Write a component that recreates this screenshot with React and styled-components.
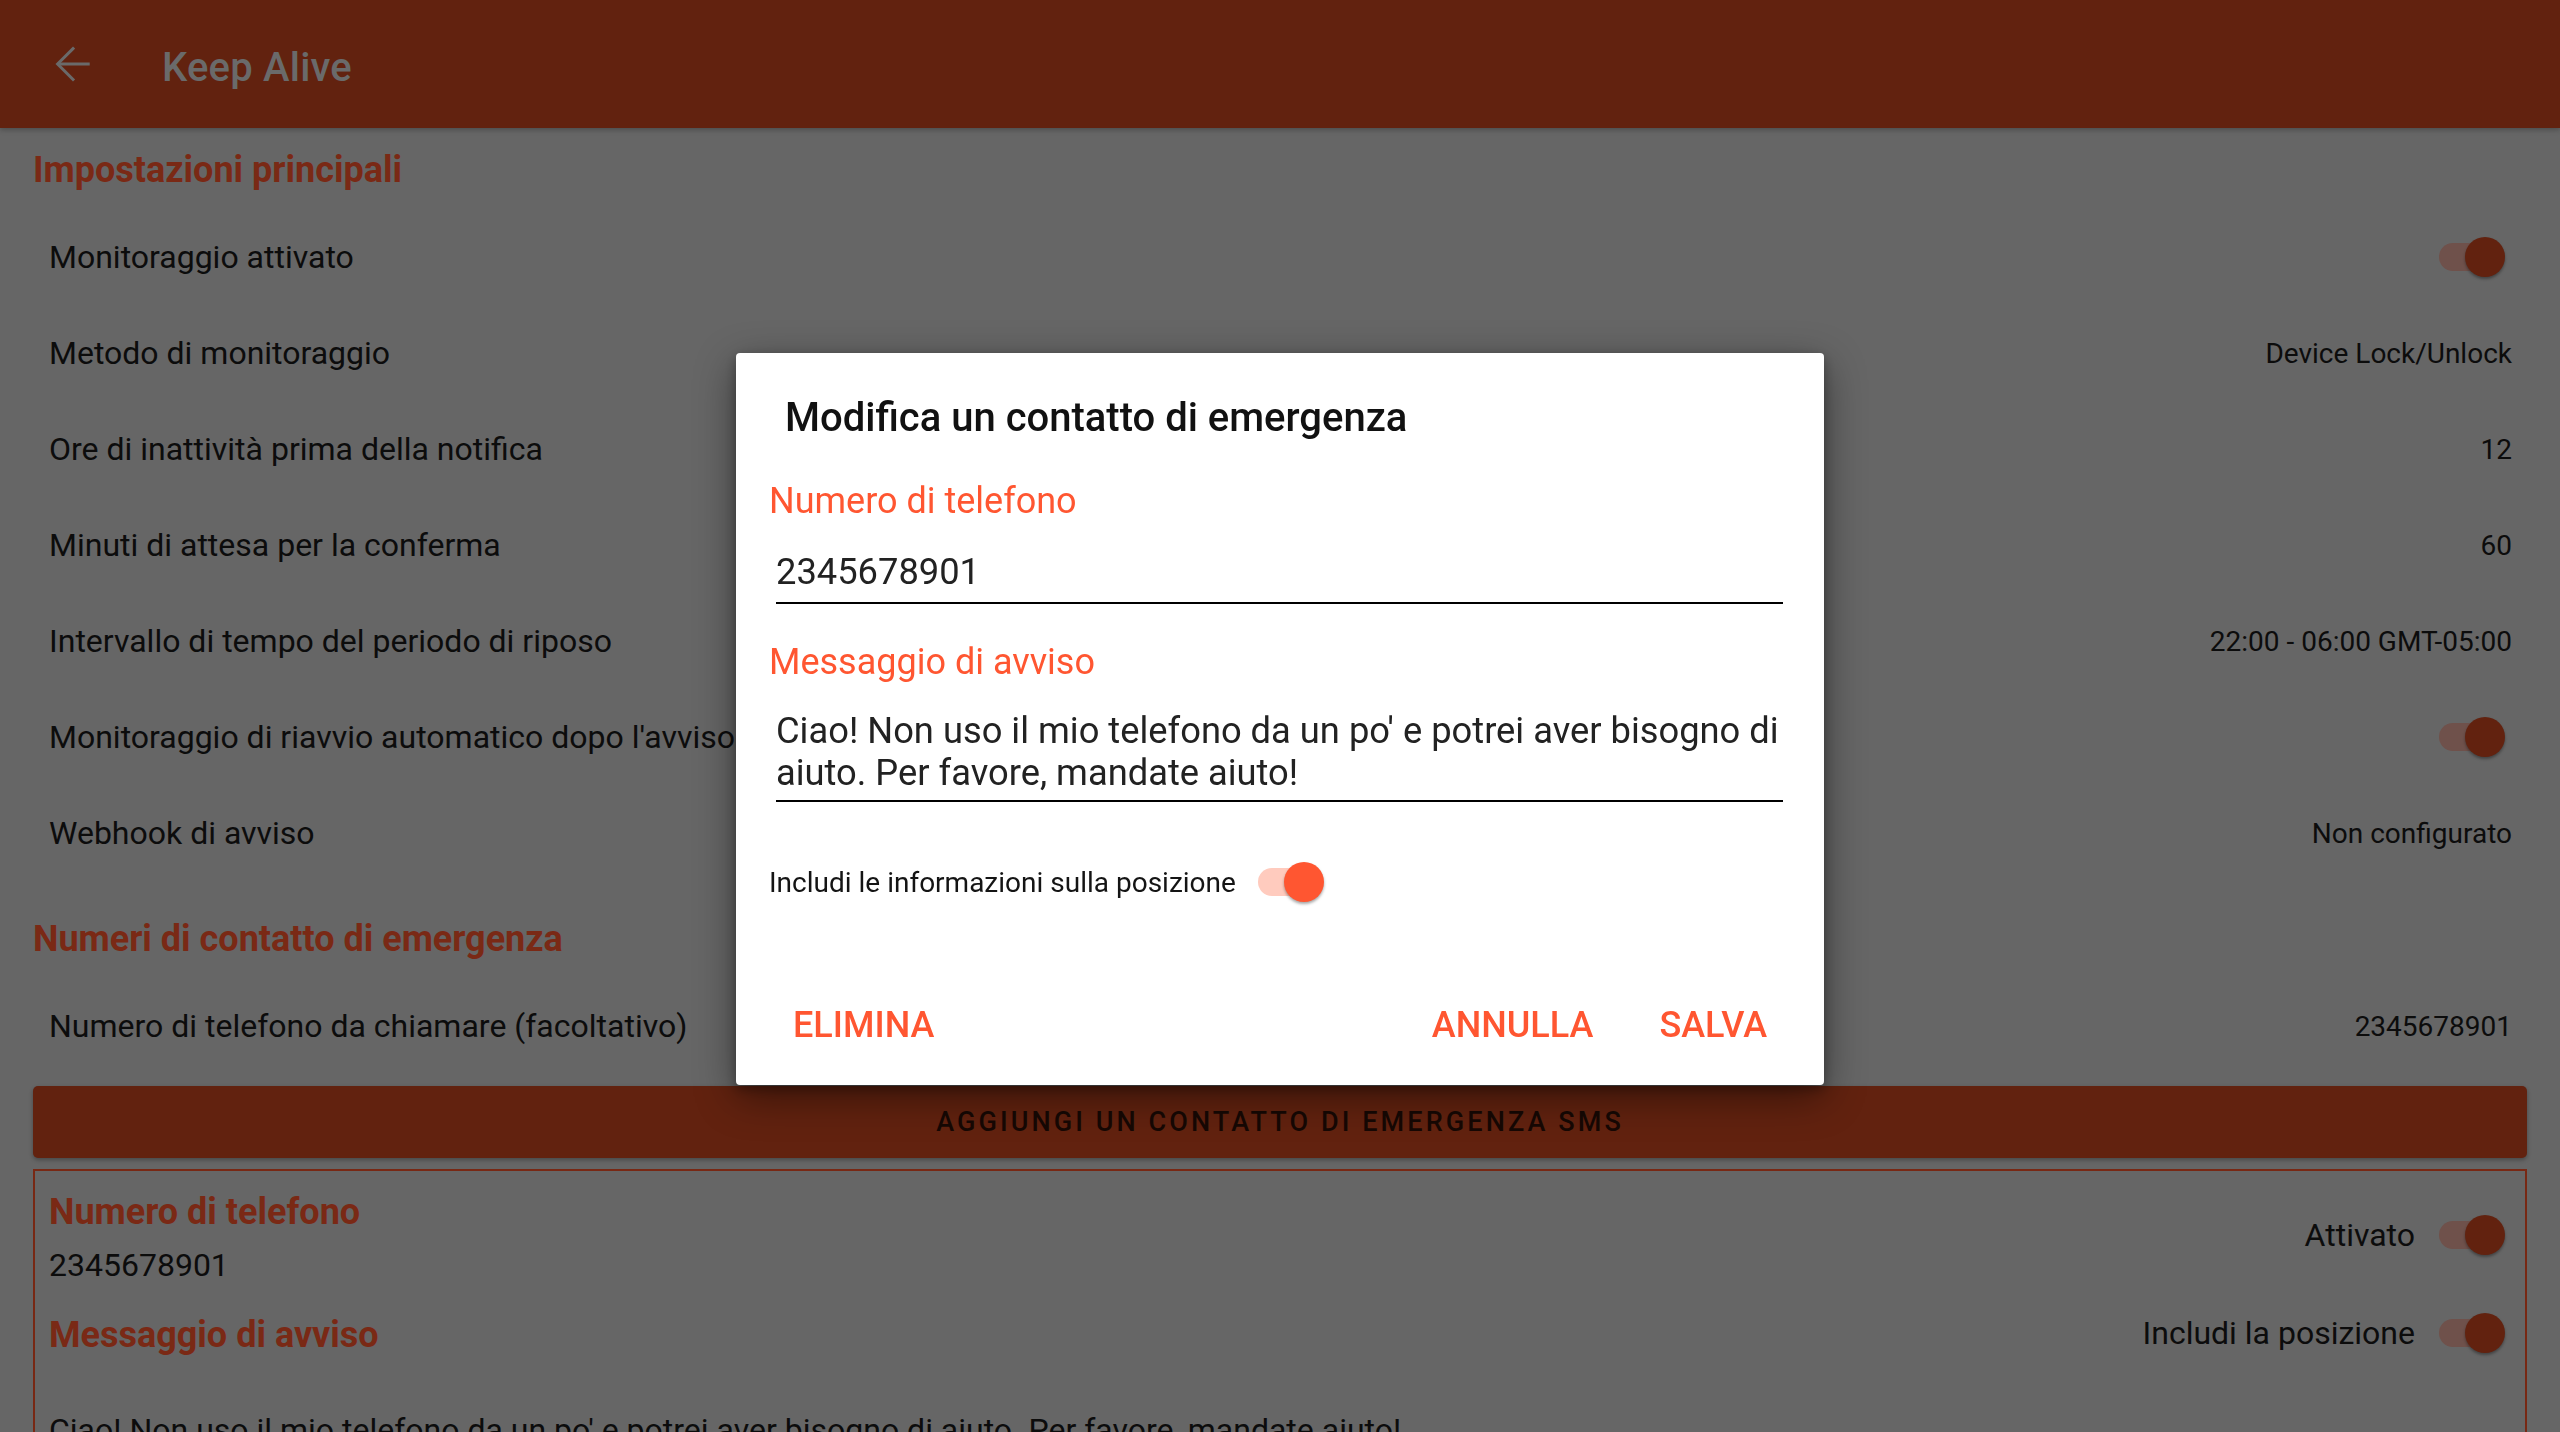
import React from "react";
import styled, { createGlobalStyle } from "styled-components";

const Global = createGlobalStyle`
  html, body { margin: 0; padding: 0; height: 100%; overflow: hidden; background: #666666; }
  body { font-family: Roboto, "Noto Sans", "Liberation Sans", sans-serif; }
  *, *::before, *::after { box-sizing: border-box; }
`;

const Page = styled.div`
  width: 2560px;
  height: 1432px;
  background: #666666;
  overflow: hidden;
`;

const AppBar = styled.header`
  height: 128px;
  background: #62220f;
  display: flex;
  align-items: center;
  padding-left: 49px;
  box-shadow: 0 2px 5px rgba(0, 0, 0, 0.25);
`;

const BackIcon = styled.svg`
  width: 48px;
  height: 48px;
  flex: none;
`;

const AppTitle = styled.h1`
  margin: 8px 0 0 65px;
  font-size: 40px;
  font-weight: 500;
  color: #6a6a6a;
  line-height: 48px;
  letter-spacing: 0.2px;
`;

const Content = styled.main`
  padding: 0 33px;
`;

const Section = styled.section`
  margin-top: ${(p) => p.$gap || 0}px;
`;

const SectionTitle = styled.h2`
  margin: 0;
  height: 81px;
  padding-top: 20px;
  font-size: 36px;
  line-height: 44px;
  font-weight: 700;
  color: #7a2915;
`;

const Row = styled.div`
  height: 96px;
  display: flex;
  align-items: center;
  justify-content: space-between;
  padding: 0 15px 0 16px;
`;

const RowLabel = styled.span`
  font-size: 32px;
  color: #0c0c0c;
  white-space: nowrap;
`;

const RowValue = styled.span`
  font-size: 28px;
  color: #0c0c0c;
  white-space: nowrap;
`;

const Switch = styled.span`
  position: relative;
  display: inline-block;
  flex: none;
  width: 66px;
  height: 40px;
  margin-right: ${(p) => p.$mr || 0}px;
  &::before {
    content: "";
    position: absolute;
    left: 0;
    right: 8px;
    top: 6px;
    height: 28px;
    border-radius: 14px;
    background: ${(p) => p.$track};
  }
  &::after {
    content: "";
    position: absolute;
    right: 0;
    top: 0;
    width: 40px;
    height: 40px;
    border-radius: 50%;
    background: ${(p) => p.$thumb};
    box-shadow: 0 2px 3px rgba(0, 0, 0, 0.35);
  }
`;

const AddButton = styled.div`
  margin-top: 12px;
  height: 72px;
  border-radius: 5px;
  background: #62220f;
  box-shadow: 0 2px 4px rgba(0, 0, 0, 0.3);
  display: flex;
  align-items: center;
  justify-content: center;
  font-size: 27px;
  font-weight: 500;
  letter-spacing: 3.1px;
  color: #160804;
  text-transform: uppercase;
`;

const Card = styled.div`
  margin-top: 11px;
  border: 2px solid #782814;
  display: grid;
  grid-template-columns: 1fr auto;
  padding: 21px 20px 0 14px;
`;

const CardLeft = styled.div`
  display: flex;
  flex-direction: column;
`;

const CardHeading = styled.div`
  font-size: 36px;
  line-height: 40px;
  font-weight: 700;
  color: #7a2915;
  margin-top: ${(p) => p.$mt || 0}px;
`;

const CardText = styled.div`
  font-size: 32px;
  line-height: 40px;
  color: #0c0c0c;
  margin-top: ${(p) => p.$mt || 0}px;
  white-space: nowrap;
`;

const CardRight = styled.div`
  display: flex;
  flex-direction: column;
  align-items: flex-end;
  gap: 50px;
  padding-top: 19px;
`;

const ToggleLine = styled.div`
  height: 48px;
  display: flex;
  align-items: center;
  gap: 24px;
  font-size: 32px;
  color: #0c0c0c;
`;

const Message = styled(CardText)`
  grid-column: 1 / -1;
`;

const Overlay = styled.div`
  position: fixed;
  inset: 0;
  display: flex;
  align-items: center;
  justify-content: center;
  padding-top: 6px;
`;

const Dialog = styled.div`
  width: 1088px;
  background: #ffffff;
  border-radius: 4px;
  box-shadow: 0 12px 40px rgba(0, 0, 0, 0.45), 0 4px 12px rgba(0, 0, 0, 0.3);
  display: flex;
  flex-direction: column;
  padding-bottom: 24px;
`;

const DialogTitle = styled.h3`
  margin: 41px 0 0 49px;
  font-size: 40px;
  line-height: 48px;
  font-weight: 500;
  color: #111111;
`;

const Form = styled.div`
  padding: 0 33px;
  display: flex;
  flex-direction: column;
`;

const FieldLabel = styled.label`
  margin-top: ${(p) => p.$mt}px;
  font-size: 36px;
  line-height: 44px;
  color: #ff5631;
`;

const Field = styled.div`
  margin: ${(p) => p.$mt}px 8px 0 7px;
  padding-bottom: ${(p) => p.$pb}px;
  border-bottom: 2px solid #000000;
  font-size: 36.3px;
  line-height: ${(p) => p.$lh}px;
  color: #222222;
  white-space: pre;
`;

const ToggleRow = styled.div`
  margin-top: 56px;
  height: 48px;
  display: flex;
  align-items: center;
  gap: 22px;
  font-size: 28px;
  color: #141414;
`;

const Actions = styled.div`
  margin-top: 83px;
  height: 72px;
  padding: 0 41px;
  display: flex;
  align-items: center;
  justify-content: space-between;
`;

const ActionGroup = styled.div`
  display: flex;
  gap: 34px;
`;

const TextButton = styled.button`
  border: none;
  background: none;
  padding: 0 16px;
  height: 72px;
  font-family: inherit;
  font-size: 36px;
  font-weight: 500;
  color: #ff5631;
  text-transform: uppercase;
  cursor: pointer;
`;

const rows = [
  { label: "Monitoraggio attivato", toggle: true },
  { label: "Metodo di monitoraggio", value: "Device Lock/Unlock" },
  { label: "Ore di inattività prima della notifica", value: "12" },
  { label: "Minuti di attesa per la conferma", value: "60" },
  { label: "Intervallo di tempo del periodo di riposo", value: "22:00 - 06:00 GMT-05:00" },
  { label: "Monitoraggio di riavvio automatico dopo l'avviso", toggle: true },
  { label: "Webhook di avviso", value: "Non configurato" },
];

const DIM_TRACK = "#6f514b";
const DIM_THUMB = "#62220f";
const MSG = "Ciao! Non uso il mio telefono da un po' e potrei aver bisogno di aiuto. Per favore, mandate aiuto!";

export default function App() {
  return (
    <Page>
      <Global />
      <AppBar>
        <BackIcon viewBox="0 0 24 24" fill="none" stroke="#6a6a6a" strokeWidth="1.5" strokeLinecap="square">
          <path d="M19.6 12H5" />
          <path d="M12 4.3L4.3 12L12 19.7" />
        </BackIcon>
        <AppTitle>Keep Alive</AppTitle>
      </AppBar>
      <Content>
        <Section>
          <SectionTitle>Impostazioni principali</SectionTitle>
          {rows.map((r) => (
            <Row key={r.label}>
              <RowLabel>{r.label}</RowLabel>
              {r.toggle ? (
                <Switch $track={DIM_TRACK} $thumb={DIM_THUMB} $mr={7} />
              ) : (
                <RowValue>{r.value}</RowValue>
              )}
            </Row>
          ))}
        </Section>
        <Section $gap={16}>
          <SectionTitle>Numeri di contatto di emergenza</SectionTitle>
          <Row>
            <RowLabel>Numero di telefono da chiamare (facoltativo)</RowLabel>
            <RowValue>2345678901</RowValue>
          </Row>
          <AddButton>Aggiungi un contatto di emergenza SMS</AddButton>
          <Card>
            <CardLeft>
              <CardHeading>Numero di telefono</CardHeading>
              <CardText $mt={13}>2345678901</CardText>
              <CardHeading $mt={30}>Messaggio di avviso</CardHeading>
            </CardLeft>
            <CardRight>
              <ToggleLine>
                Attivato
                <Switch $track={DIM_TRACK} $thumb={DIM_THUMB} />
              </ToggleLine>
              <ToggleLine>
                Includi la posizione
                <Switch $track={DIM_TRACK} $thumb={DIM_THUMB} />
              </ToggleLine>
            </CardRight>
            <Message $mt={53}>{MSG}</Message>
          </Card>
        </Section>
      </Content>
      <Overlay>
        <Dialog>
          <DialogTitle>Modifica un contatto di emergenza</DialogTitle>
          <Form>
            <FieldLabel $mt={37}>Numero di telefono</FieldLabel>
            <Field $mt={27} $pb={8} $lh={44}>2345678901</Field>
            <FieldLabel $mt={36}>Messaggio di avviso</FieldLabel>
            <Field $mt={26} $pb={6} $lh={42}>
              {"Ciao! Non uso il mio telefono da un po' e potrei aver bisogno di\naiuto. Per favore, mandate aiuto!"}
            </Field>
            <ToggleRow>
              Includi le informazioni sulla posizione
              <Switch $track="#ffcbbe" $thumb="#ff5631" />
            </ToggleRow>
          </Form>
          <Actions>
            <TextButton>Elimina</TextButton>
            <ActionGroup>
              <TextButton>Annulla</TextButton>
              <TextButton>Salva</TextButton>
            </ActionGroup>
          </Actions>
        </Dialog>
      </Overlay>
    </Page>
  );
}
